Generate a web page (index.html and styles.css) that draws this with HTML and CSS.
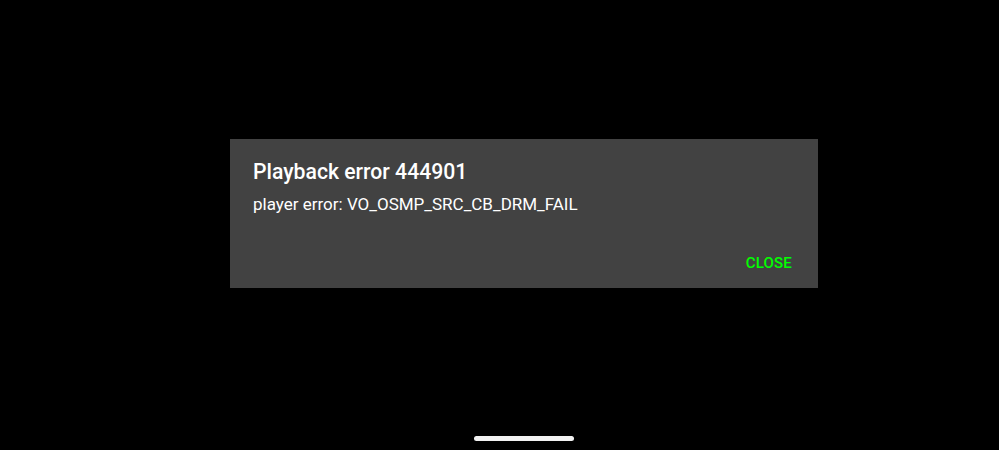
FILE: index.html
```html
<!DOCTYPE html>
<html>
<head>
<meta charset="utf-8">
<link rel="stylesheet" href="styles.css">
</head>
<body>
<div class="screen">
  <div class="dialog">
    <div class="title">Playback error 444901</div>
    <div class="message">player error: VO_OSMP_SRC_CB_DRM_FAIL</div>
    <div class="actions"><span class="btn">CLOSE</span></div>
  </div>
  <div class="home-bar"></div>
</div>
</body>
</html>
```
FILE: styles.css
```css
html, body {
  margin: 0;
  padding: 0;
  background: #000;
}
.screen {
  width: 999px;
  height: 450px;
  position: relative;
  display: flex;
  flex-direction: column;
  align-items: flex-start;
  font-family: Roboto, "Liberation Sans", sans-serif;
}
.dialog {
  margin-top: 139px;
  margin-left: 230px;
  width: 588px;
  height: 149px;
  box-sizing: border-box;
  background: #424242;
  padding: 20px 23px 0 23px;
  display: flex;
  flex-direction: column;
}
.title {
  color: #fff;
  font-size: 21.2px;
  font-weight: 500;
  line-height: 26px;
}
.message {
  color: #fff;
  font-size: 17px;
  line-height: 20px;
  margin-top: 9px;
}
.actions {
  display: flex;
  justify-content: flex-end;
  margin-top: 40px;
  padding-right: 3px;
}
.btn {
  color: #00ff00;
  font-size: 15px;
  font-weight: 500;
  line-height: 18px;
  letter-spacing: 0.2px;
}
.home-bar {
  position: absolute;
  left: 474px;
  top: 436px;
  width: 100px;
  height: 5px;
  border-radius: 3px;
  background: #f2f2f2;
}
```
